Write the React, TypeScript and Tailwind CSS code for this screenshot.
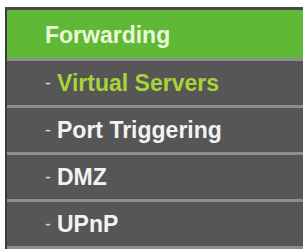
const items = [
  { label: "Virtual Servers", active: true },
  { label: "Port Triggering", active: false },
  { label: "DMZ", active: false },
  { label: "UPnP", active: false },
];

export default function App() {
  return (
    <div className="w-[306px] h-[251px] bg-white pl-[5px] pt-[7px] pr-[3px] font-['Liberation_Sans',Arial,sans-serif]">
      <div className="border-l-2 border-t-[3px] border-l-[#3c3c3c] border-t-[#484848] bg-[#565656]">
        <div className="h-[48px] flex items-center pl-[38px] pt-[2px] bg-[#5fb936] text-[#e9f8d8] text-[23px] font-bold leading-none">
          Forwarding
        </div>
        <div className="h-[3px] bg-[#8e8e8e]" />
        {items.map((item) => (
          <div key={item.label}>
            <div
              className={
                item.active
                  ? "h-[44px] flex items-center pl-[38px] text-[23px] font-bold leading-none text-[#a7d436]"
                  : "h-[44px] flex items-center pl-[38px] text-[23px] font-bold leading-none text-[#f2f2f2]"
              }
            >
              <span className="text-[#d8d8d8] text-[18px] font-normal mr-[6px]">-</span>
              {item.label}
            </div>
            <div className="h-[3px] bg-[#8e8e8e]" />
          </div>
        ))}
      </div>
    </div>
  );
}
